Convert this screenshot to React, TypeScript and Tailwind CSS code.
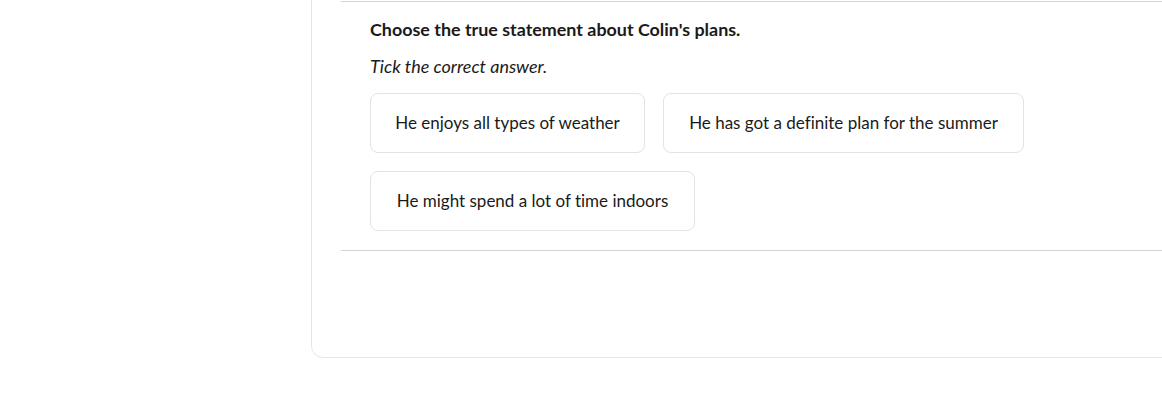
const options = [
  [
    { text: "He enjoys all types of weather", w: "w-[275px]" },
    { text: "He has got a definite plan for the summer", w: "w-[361px]" },
  ],
  [{ text: "He might spend a lot of time indoors", w: "w-[325px]" }],
];

export default function App() {
  return (
    <div className="h-[413px] w-full overflow-hidden bg-white font-['Lato',sans-serif] text-[#1a1a1a] [font-variant-ligatures:none]">
      <div className="ml-[311px] mt-[-20px] w-[1000px] rounded-[12px] border border-[#e6e6e6] bg-white pl-[29px] pt-[20px] pb-[106px]">
        <div className="border-y border-[#d4d4d4] pl-[29px] pt-[15px] pb-[19px]">
          <h2 className="text-[17.9px] font-bold leading-[24px]">Choose the true statement about Colin's plans.</h2>
          <p className="mt-[13px] text-[18px] italic leading-[24px]">Tick the correct answer.</p>
          <div className="mt-[15px] flex flex-col gap-[18px]">
            {options.map((row, i) => (
              <div key={i} className="flex gap-[18px]">
                {row.map((o) => (
                  <div
                    key={o.text}
                    className={`${o.w} flex h-[60px] items-center justify-center rounded-[8px] border border-[#e3e3e3] text-[17px]`}
                  >
                    {o.text}
                  </div>
                ))}
              </div>
            ))}
          </div>
        </div>
      </div>
    </div>
  );
}
